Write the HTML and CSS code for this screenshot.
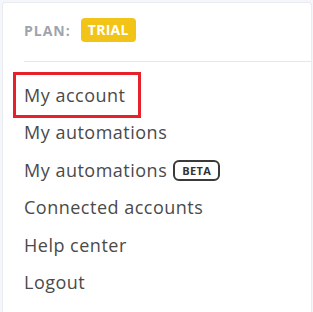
FILE: index.html
```html
<!DOCTYPE html>
<html lang="en">
<head>
    <meta charset="UTF-8">
    <title>Account menu</title>
    <link rel="stylesheet" href="styles.css">
</head>
<body>
    <div class="page">
        <div class="side-strip"></div>
        <div class="dropdown">
            <div class="plan">
                <span class="plan-label">PLAN:</span>
                <span class="plan-badge">TRIAL</span>
            </div>
            <ul class="menu">
                <li class="highlight"><a href="#">My account</a></li>
                <li><a href="#">My automations</a></li>
                <li><a href="#">My automations <span class="beta">BETA</span></a></li>
                <li><a href="#">Connected accounts</a></li>
                <li><a href="#">Help center</a></li>
                <li><a href="#">Logout</a></li>
            </ul>
        </div>
    </div>
</body>
</html>
```

FILE: styles.css
```css
* {
    margin: 0;
    padding: 0;
    box-sizing: border-box;
}

body {
    font-family: "Open Sans", Arial, sans-serif;
    background-color: #f4f6f9;
    width: 313px;
    height: 312px;
    overflow: hidden;
}

.page {
    display: flex;
    padding: 2px 1px 0 0;
    height: 312px;
}

.side-strip {
    width: 2px;
}

.dropdown {
    flex: 1;
    background-color: #ffffff;
    border: 1px solid #e8ebf0;
    border-bottom: none;
    border-radius: 4px 4px 0 0;
}

.plan {
    display: flex;
    align-items: center;
    gap: 10px;
    margin-left: 21px;
    padding: 15px 0 19px;
    border-bottom: 1px solid #e3e7ee;
}

.plan-label {
    font-size: 14px;
    font-weight: 700;
    color: #9ea4ae;
    letter-spacing: 1px;
}

.plan-badge {
    background-color: #f2c417;
    color: #ffffff;
    font-size: 14px;
    font-weight: 700;
    padding: 0 7px;
    line-height: 24px;
    border-radius: 4px;
    letter-spacing: 0.3px;
}

.menu {
    list-style: none;
    padding-top: 15px;
}

.menu li a {
    display: inline-flex;
    align-items: center;
    gap: 6px;
    position: relative;
    margin-left: 21px;
    font-size: 18px;
    line-height: 37.4px;
    letter-spacing: 0.5px;
    color: #4a4a4a;
    text-decoration: none;
}

.menu li.highlight a::after {
    content: "";
    position: absolute;
    left: -11px;
    right: -16px;
    top: -5px;
    bottom: -4px;
    border: 3px solid #e62129;
}

.beta {
    display: inline-block;
    border: 2px solid #3a3a3a;
    border-radius: 6px;
    font-size: 11px;
    font-weight: 700;
    line-height: 17px;
    padding: 0 7px;
    letter-spacing: 0.4px;
    color: #333333;
}
```
